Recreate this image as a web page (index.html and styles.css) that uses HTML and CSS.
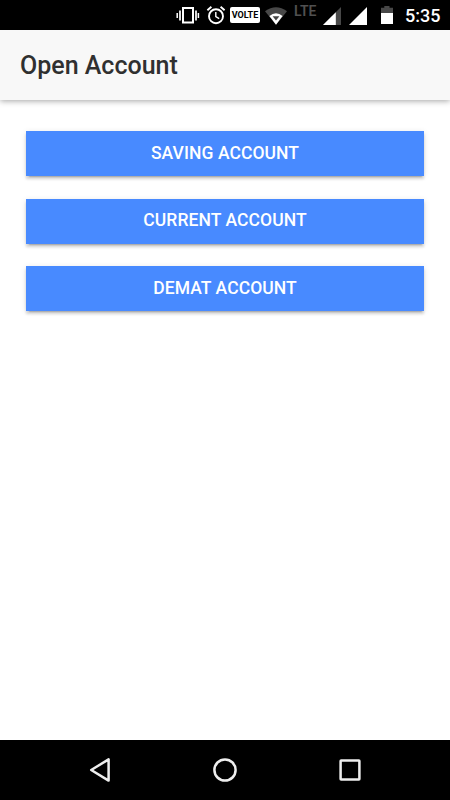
FILE: index.html
```html
<!DOCTYPE html>
<html lang="en">
<head>
<meta charset="utf-8">
<title>Open Account</title>
<link rel="stylesheet" href="styles.css">
</head>
<body>
<div class="screen">
  <div class="status">
    <svg class="vibrate" width="24" height="20" viewBox="0 0 24 20" fill="none" stroke="#fff">
      <rect x="7" y="3" width="10" height="14.5" stroke-width="2"/>
      <path d="M4 5.5v10M20 5.5v10" stroke-width="1.7"/>
      <path d="M1.2 8v5M22.4 8v5" stroke-width="1.5"/>
    </svg>
    <svg class="alarm" width="20" height="20" viewBox="0 0 20 20" fill="none" stroke="#fff" stroke-width="1.9">
      <circle cx="10" cy="11.2" r="7"/>
      <path d="M1.4 5.2l4-3.4M18.6 5.2l-4-3.4"/>
      <path d="M9.8 7v4.6l3.4 2.1" stroke-width="1.4"/>
    </svg>
    <span class="volte">VOLTE</span>
    <svg class="wifi" width="22" height="18" viewBox="0 0 22 18">
      <path d="M0 4.2Q11-3.8 22 4.2L11 17.8z" fill="#484848"/>
      <path d="M4.4 9Q11 3.4 17.6 9L11 17.8z" fill="#fff"/>
      <path d="M7.6 9.2h6.8L11 13.6z" fill="#444"/>
    </svg>
    <span class="lte">LTE</span>
    <svg class="signal-weak" width="18" height="18" viewBox="0 0 18 18">
      <path d="M18 0v18H0z" fill="#484848"/>
      <path d="M12.8 5.2V18H0z" fill="#fff"/>
    </svg>
    <svg class="signal-full" width="18" height="18" viewBox="0 0 18 18"><path d="M18 0v18H0z" fill="#fff"/></svg>
    <svg class="battery" width="12" height="18" viewBox="0 0 12 18">
      <path d="M3.3 0h5.2v1.8H12V7H0V1.8h3.3z" fill="#484848"/>
      <path d="M0 7h12v11H0z" fill="#fff"/>
    </svg>
    <span class="clock">5:35</span>
  </div>
  <header class="toolbar"><h1 class="title">Open Account</h1></header>
  <main class="content">
    <button class="button">Saving Account</button>
    <button class="button">Current Account</button>
    <button class="button">Demat Account</button>
  </main>
  <nav class="navbar">
    <svg width="26" height="26" viewBox="0 0 26 26"><path d="M21.6 2.4v21.2L4.2 13z"/></svg>
    <svg width="26" height="26" viewBox="0 0 26 26"><circle cx="13" cy="13" r="10.6"/></svg>
    <svg width="26" height="26" viewBox="0 0 26 26"><rect x="3.6" y="3.6" width="18.8" height="18.8" rx=".5"/></svg>
  </nav>
</div>
</body>
</html>
```

FILE: styles.css
```css
* {
  box-sizing: border-box;
}

body {
  margin: 0;
  font-family: Roboto, "Liberation Sans", sans-serif;
  background: #fff;
}

.screen {
  display: flex;
  flex-direction: column;
  width: 450px;
  height: 800px;
  overflow: hidden;
}

.status {
  display: flex;
  flex: none;
  align-items: flex-start;
  height: 30px;
  padding-left: 176px;
  background: #000;
  color: #fff;
}

.status > * {
  flex: none;
}

.vibrate {
  margin-top: 5px;
}

.alarm {
  margin: 5px 0 0 6px;
}

.volte {
  width: 30px;
  height: 16px;
  margin: 7px 0 0 4px;
  border-radius: 2px;
  background: #fff;
  color: #000;
  font-size: 9px;
  font-weight: 700;
  line-height: 16px;
  text-align: center;
}

.wifi {
  margin: 7px 0 0 5px;
}

.lte {
  width: 24px;
  margin: 4px 0 0 7px;
  color: #505050;
  font-size: 14px;
  font-weight: 600;
  line-height: 15px;
}

.signal-weak {
  margin: 7px 0 0 5px;
}

.signal-full {
  margin: 7px 0 0 8px;
}

.battery {
  margin: 6px 0 0 14px;
}

.clock {
  margin-left: 12px;
  font-size: 18px;
  font-weight: 500;
  line-height: 31px;
}

.toolbar {
  display: flex;
  flex: none;
  align-items: center;
  height: 70px;
  padding: 0 20px;
  background: #f8f8f8;
  box-shadow: 0 1px 6px rgba(0, 0, 0, .36);
}

.title {
  margin: 0;
  color: #303030;
  font-size: 25px;
  font-weight: 500;
}

.content {
  display: flex;
  flex: 1;
  flex-direction: column;
  gap: 22.5px;
  padding: 31.25px 26.25px;
}

.button {
  height: 45px;
  padding: 0 0 2px;
  border: 0;
  background: #488aff;
  box-shadow: 0 2.5px 2.5px rgba(0, 0, 0, .14), 0 3.75px 1.25px -2.5px rgba(0, 0, 0, .2), 0 1.25px 6.25px rgba(0, 0, 0, .12);
  color: #fff;
  font-family: inherit;
  font-size: 17.5px;
  font-weight: 500;
  letter-spacing: .08px;
  text-transform: uppercase;
}

.navbar {
  display: flex;
  flex: none;
  align-items: center;
  justify-content: center;
  gap: 99px;
  height: 60px;
  background: #000;
  fill: none;
  stroke: #eee;
  stroke-width: 2.5;
  stroke-linejoin: round;
}
```
